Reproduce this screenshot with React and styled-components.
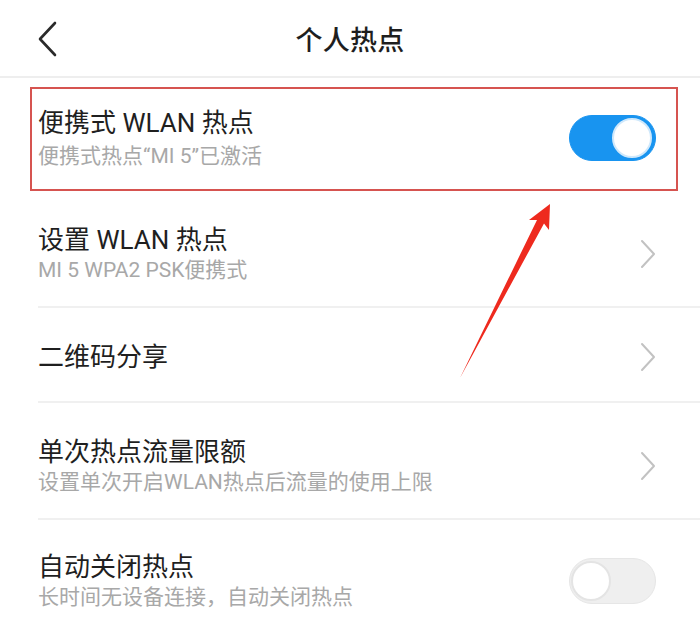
import styled, { createGlobalStyle } from 'styled-components'

const GlobalStyle = createGlobalStyle`
    html, body {
        margin: 0;
        padding: 0;
        background: #ffffff;
    }
    body {
        font-family: "Noto Sans CJK SC", "Noto Sans", sans-serif;
        color: #222;
    }
`

const Page = styled.div`
    position: relative;
    width: 700px;
    height: 628px;
    overflow: hidden;
    background: #fff;
`

const Header = styled.div`
    display: grid;
    grid-template-columns: 1fr auto 1fr;
    align-items: center;
    height: 76px;
    border-bottom: 2px solid #eeeeee;
`

const BackButton = styled.div`
    display: flex;
    align-items: center;
    padding-left: 37px;
    padding-top: 1px;
`

const Title = styled.div`
    font-size: 27px;
    font-weight: 500;
    color: #1e1e1e;
    letter-spacing: 0.3px;
`

const List = styled.div`
    display: flex;
    flex-direction: column;
`

const Row = styled.div`
    box-sizing: border-box;
    display: flex;
    align-items: center;
    justify-content: space-between;
    height: ${props => props.height}px;
    margin-left: 38px;
    padding: ${props => props.padTop || 5}px 44px 0 0;
    border-bottom: ${props => props.last ? 'none' : '2px solid #f0f0f0'};
`

const HighlightRow = styled.div`
    box-sizing: border-box;
    display: flex;
    align-items: center;
    justify-content: space-between;
    height: 104px;
    margin: 9px 22px 0 30px;
    padding: 0 20px 2px 6px;
    border: 2px solid #d65450;
`

const Texts = styled.div`
    display: flex;
    flex-direction: column;
`

const ItemTitle = styled.div`
    font-family: "Roboto", "Noto Sans CJK SC", sans-serif;
    font-size: 26px;
    line-height: 32px;
    color: #1f1f1f;
`

const ItemSub = styled.div`
    font-family: "Roboto", "Noto Sans CJK SC", sans-serif;
    font-size: 21px;
    line-height: 28px;
    color: #a8a8a8;
    margin-top: ${props => props.gap || 0}px;
`

const Switch = styled.div`
    box-sizing: border-box;
    position: relative;
    width: 87px;
    height: 46px;
    border-radius: 23px;
    flex-shrink: 0;
    background: ${props => props.on ? '#1894f0' : '#efefef'};
    border: 1px solid ${props => props.on ? '#1894f0' : '#e6e6e6'};
`

const Knob = styled.div`
    box-sizing: border-box;
    position: absolute;
    top: 2px;
    ${props => props.on ? 'right: 3px;' : 'left: 1px;'}
    width: 40px;
    height: 40px;
    border-radius: 50%;
    background: #fff;
    border: 2px solid ${props => props.on ? '#cfe8fb' : '#e4e4e4'};
`

const Arrow = styled.svg`
    position: absolute;
    left: 0;
    top: 0;
    pointer-events: none;
`

const Toggle = ({ on }) => (
    <Switch on={on}>
        <Knob on={on} />
    </Switch>
)

const Chevron = () => (
    <svg width="16" height="30" viewBox="0 0 16 30">
        <path d="M2 2 L14 15 L2 28" fill="none" stroke="#c2c2c2" strokeWidth="2" strokeLinecap="round" strokeLinejoin="round" />
    </svg>
)

const BackIcon = () => (
    <svg width="20" height="36" viewBox="0 0 20 36">
        <path d="M18 2 L3 18 L18 34" fill="none" stroke="#2a2a2a" strokeWidth="2.6" strokeLinecap="round" strokeLinejoin="round" />
    </svg>
)

export default function App() {
    return (
        <Page>
            <GlobalStyle />
            <Header>
                <BackButton><BackIcon /></BackButton>
                <Title>个人热点</Title>
                <div />
            </Header>
            <List>
                <HighlightRow>
                    <Texts>
                        <ItemTitle>便携式 WLAN 热点</ItemTitle>
                        <ItemSub gap={3}>便携式热点“MI 5”已激活</ItemSub>
                    </Texts>
                    <Toggle on />
                </HighlightRow>
                <Row height={117} padTop={10}>
                    <Texts>
                        <ItemTitle>设置 WLAN 热点</ItemTitle>
                        <ItemSub>MI 5 WPA2 PSK便携式</ItemSub>
                    </Texts>
                    <Chevron />
                </Row>
                <Row height={95}>
                    <Texts>
                        <ItemTitle>二维码分享</ItemTitle>
                    </Texts>
                    <Chevron />
                </Row>
                <Row height={117} padTop={11}>
                    <Texts>
                        <ItemTitle>单次热点流量限额</ItemTitle>
                        <ItemSub>设置单次开启WLAN热点后流量的使用上限</ItemSub>
                    </Texts>
                    <Chevron />
                </Row>
                <Row height={117} last>
                    <Texts>
                        <ItemTitle>自动关闭热点</ItemTitle>
                        <ItemSub>长时间无设备连接，自动关闭热点</ItemSub>
                    </Texts>
                    <Toggle />
                </Row>
            </List>
            <Arrow width="700" height="628" viewBox="0 0 700 628">
                <polygon
                    points="550,204 549,230 544,223.5 460,378 537,219.9 529,220"
                    fill="#ee2a1e"
                />
            </Arrow>
        </Page>
    )
}
